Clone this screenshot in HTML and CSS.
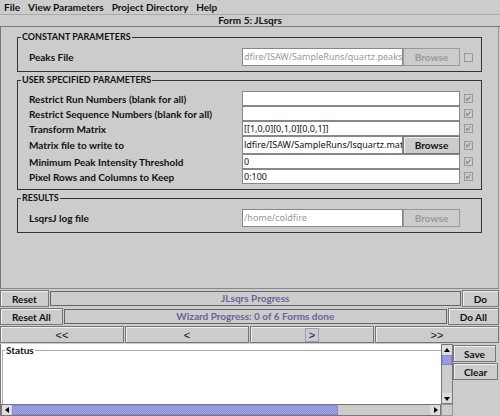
FILE: index.html
```html
<!DOCTYPE html>
<html lang="en">
<head>
<meta charset="utf-8">
<title>Form 5: JLsqrs</title>
<link rel="stylesheet" href="styles.css">
</head>
<body>
<nav class="menu">
  <button type="button">File</button>
  <button type="button">View Parameters</button>
  <button type="button">Project Directory</button>
  <button type="button">Help</button>
</nav>
<h1 class="title">Form 5: JLsqrs</h1>
<main class="form">
  <fieldset class="group">
    <legend>CONSTANT PARAMETERS</legend>
    <div class="row tall">
      <label for="peaks">Peaks File</label>
      <div class="control"><input class="field" id="peaks" type="text" value="dfire/ISAW/SampleRuns/quartz.peaks" disabled><button class="btn browse" type="button" disabled>Browse</button></div>
      <input class="check" type="checkbox" aria-label="Peaks File valid" disabled>
    </div>
  </fieldset>
  <fieldset class="group">
    <legend>USER SPECIFIED PARAMETERS</legend>
    <div class="row">
      <label for="runs">Restrict Run Numbers (blank for all)</label>
      <div class="control"><input class="field" id="runs" type="text"></div>
      <input class="check" type="checkbox" aria-label="Run numbers valid" checked disabled>
    </div>
    <div class="row">
      <label for="seqs">Restrict Sequence Numbers (blank for all)</label>
      <div class="control"><input class="field" id="seqs" type="text"></div>
      <input class="check" type="checkbox" aria-label="Sequence numbers valid" checked disabled>
    </div>
    <div class="row">
      <label for="transform">Transform Matrix</label>
      <div class="control"><input class="field" id="transform" type="text" value="[[1,0,0][0,1,0][0,0,1]]"></div>
      <input class="check" type="checkbox" aria-label="Transform matrix valid" checked disabled>
    </div>
    <div class="row tall">
      <label for="matfile">Matrix file to write to</label>
      <div class="control"><input class="field" id="matfile" type="text" value="ldfire/ISAW/SampleRuns/lsquartz.mat"><button class="btn browse" type="button">Browse</button></div>
      <input class="check" type="checkbox" aria-label="Matrix file valid" checked disabled>
    </div>
    <div class="row">
      <label for="threshold">Minimum Peak Intensity Threshold</label>
      <div class="control"><input class="field" id="threshold" type="text" value="0"></div>
      <input class="check" type="checkbox" aria-label="Threshold valid" checked disabled>
    </div>
    <div class="row">
      <label for="pixels">Pixel Rows and Columns to Keep</label>
      <div class="control"><input class="field" id="pixels" type="text" value="0:100"></div>
      <input class="check" type="checkbox" aria-label="Pixel rows valid" checked disabled>
    </div>
  </fieldset>
  <fieldset class="group">
    <legend>RESULTS</legend>
    <div class="row tall">
      <label for="log">LsqrsJ log file</label>
      <div class="control"><input class="field" id="log" type="text" value="/home/coldfire" disabled><button class="btn browse" type="button" disabled>Browse</button></div>
    </div>
  </fieldset>
</main>
<section class="progress-row">
  <button class="btn" type="button">Reset</button>
  <div class="progress">JLsqrs Progress</div>
  <button class="btn" type="button">Do</button>
</section>
<section class="progress-row">
  <button class="btn" type="button">Reset All</button>
  <div class="progress">Wizard Progress: 0 of 6 Forms done</div>
  <button class="btn" type="button">Do All</button>
</section>
<nav class="steps">
  <button class="btn" type="button">&lt;&lt;</button>
  <button class="btn" type="button">&lt;</button>
  <button class="btn" type="button"><span class="focus">&gt;</span></button>
  <button class="btn" type="button">&gt;&gt;</button>
</nav>
<footer class="bottom">
  <div class="scroller">
    <fieldset class="status"><legend>Status</legend></fieldset>
    <div class="bar vertical">
      <button type="button" aria-label="Scroll up"><svg viewBox="0 0 10 10"><path d="M2 7h6L5 3z"/></svg></button>
      <div class="track"><div class="thumb"></div></div>
      <button type="button" aria-label="Scroll down"><svg viewBox="0 0 10 10"><path d="M2 4h6L5 8z"/></svg></button>
    </div>
    <div class="bar horizontal">
      <button type="button" aria-label="Scroll left"><svg viewBox="0 0 10 10"><path d="M7 2v6L3 5z"/></svg></button>
      <div class="track"><div class="thumb"></div></div>
      <button type="button" aria-label="Scroll right"><svg viewBox="0 0 10 10"><path d="M4 2v6l4-3z"/></svg></button>
    </div>
    <div class="corner"></div>
  </div>
  <div class="actions">
    <button class="btn" type="button">Save</button>
    <button class="btn" type="button">Clear</button>
  </div>
</footer>
</body>
</html>
```
FILE: styles.css
```css
* { box-sizing: border-box; }

body {
  margin: 0;
  min-height: 100vh;
  display: flex;
  flex-direction: column;
  background: #ccc;
  color: #111;
  font: bold 10px/12px Lato, sans-serif;
}

button, input { font: inherit; color: inherit; margin: 0; }

.menu {
  display: flex;
  gap: 8px;
  height: 15px;
  padding: 0 4px;
  border-bottom: 1px solid #aaa;
}
.menu button { padding: 0; border: 0; background: none; }

.title {
  margin: 0;
  height: 12px;
  font-size: 10px;
  line-height: 11px;
  text-align: center;
  border-bottom: 1px solid #777;
}

.form {
  flex: 1;
  padding: 4px 16px 0;
  border-left: 1px solid #777;
  border-right: 1px solid #999;
  border-bottom: 1px solid #888;
  margin-right: 1px;
}

.group {
  min-width: 0;
  margin: 0 0 2px;
  padding: 5px 8px 5px 11px;
  border: 1px solid #333;
}
.group legend { margin-left: -8px; padding: 0 1px; font-size: 9px; }

.row {
  display: grid;
  grid-template-columns: minmax(0, 213fr) minmax(0, 218fr) 13px;
  align-items: center;
  height: 15px;
  white-space: nowrap;
}
.row.tall { height: 18px; }
.control { display: flex; height: 100%; }

.field {
  flex: 1;
  min-width: 0;
  padding: 0 0 0 1px;
  border: 1px solid #888;
  border-radius: 0;
  background: #fff;
  font-family: "Noto Sans", sans-serif;
  font-size: 9px;
  font-weight: normal;
}
.field:disabled { color: #999; }

.btn {
  padding: 0;
  border: 1px solid #777;
  border-radius: 0;
  background: #ccc;
  box-shadow: inset 1px 1px #eee;
}
.btn:disabled { color: #999; border-color: #999; box-shadow: none; }
.browse { width: 57px; }

.check {
  appearance: none;
  display: grid;
  justify-self: end;
  width: 9px;
  height: 9px;
  border: 1px solid #999;
}
.check:checked::before {
  content: "";
  margin: 1px;
  background: #888;
  clip-path: polygon(0 40%, 20% 40%, 30% 65%, 85% 0, 100% 15%, 30% 100%, 10% 100%);
}

.progress-row {
  display: flex;
  gap: 1px;
  height: 18px;
  padding: 1px 1px 0 0;
}
.progress-row .btn { padding: 0 11px; }
.progress {
  flex: 1;
  margin: 1px 0;
  border: 1px solid #666;
  color: #669;
  line-height: 13px;
  text-align: center;
}

.steps {
  display: grid;
  grid-template-columns: repeat(4, 1fr);
  gap: 1px;
  height: 19px;
  padding: 1px 1px 1px 0;
}
.steps .btn { font: 11px/12px "Liberation Sans", sans-serif; }
.focus { padding: 0 3px; border: 1px solid #99c; }

.bottom { display: flex; height: 72px; }
.scroller {
  flex: 1;
  display: grid;
  grid-template: 60px 12px / 1fr 12px;
  border-left: 1px solid #777;
  background: #fff;
}
.status {
  min-width: 0;
  margin: 0 0 0 1px;
  padding: 0;
  border: 1px solid #aaa;
  border-width: 1px 0 0 1px;
}
.status legend { padding: 0 1px; margin-left: 2px; }

.bar { display: flex; border: 1px solid #777; min-width: 0; min-height: 0; background: #ccc; }
.vertical { flex-direction: column; }
.bar button { flex: none; width: 10px; height: 10px; padding: 0; border: 0; background: #ddd; }
.bar svg { display: block; width: 10px; height: 10px; }
.track { flex: 1; }
.thumb {
  background: repeating-conic-gradient(#aaf 0 25%, #88c 0 50%) 0 0 / 2px 2px;
  border: 1px solid #88c;
}
.vertical .thumb { height: 10px; }
.horizontal .thumb { width: 78%; height: 10px; }
.corner { border: 1px solid #999; background: #ccc; }

.actions {
  width: 47px;
  display: flex;
  flex-direction: column;
  align-items: flex-start;
  gap: 1px;
  padding: 1px 1px 0 0;
}
.actions .btn { height: 17px; padding: 0 10px; }
```
